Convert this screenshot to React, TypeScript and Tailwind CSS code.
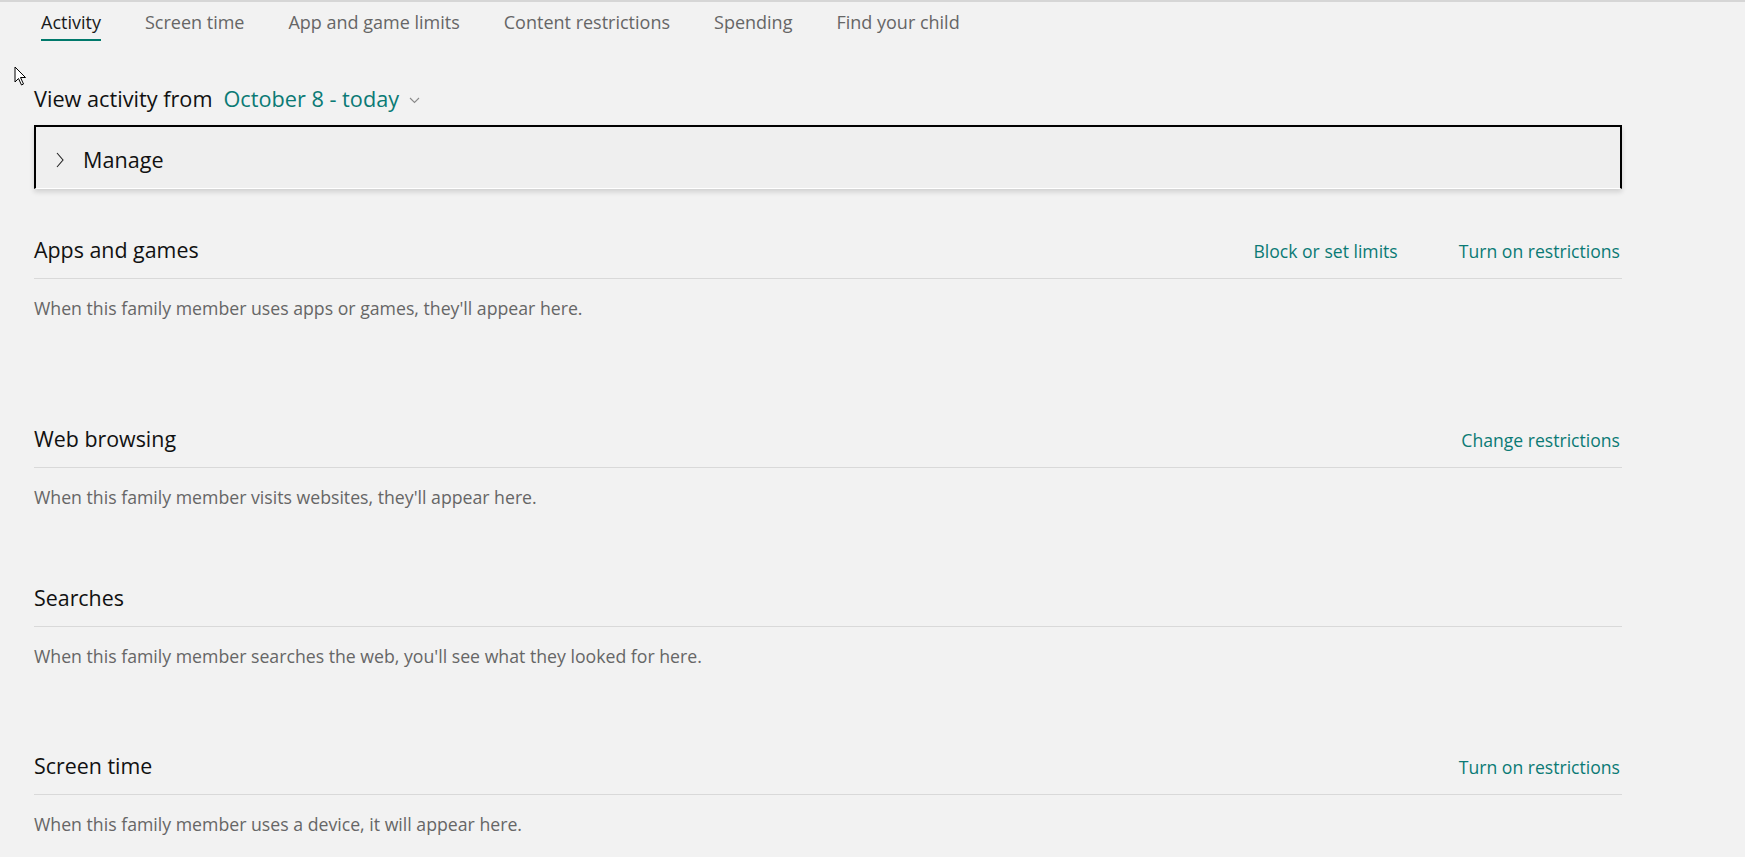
import React from "react"

const tabs = ["Activity", "Screen time", "App and game limits", "Content restrictions", "Spending", "Find your child"]

type Section = {
  title: string
  links: string[]
  text: string
  pad: string
}

const sections: Section[] = [
  {
    title: "Apps and games",
    links: ["Block or set limits", "Turn on restrictions"],
    text: "When this family member uses apps or games, they'll appear here.",
    pad: "pb-[105px]",
  },
  {
    title: "Web browsing",
    links: ["Change restrictions"],
    text: "When this family member visits websites, they'll appear here.",
    pad: "pb-[75px]",
  },
  {
    title: "Searches",
    links: [],
    text: "When this family member searches the web, you'll see what they looked for here.",
    pad: "pb-[84px]",
  },
  {
    title: "Screen time",
    links: ["Turn on restrictions"],
    text: "When this family member uses a device, it will appear here.",
    pad: "pb-[20px]",
  },
]

function Cursor() {
  return (
    <svg className="absolute left-[14px] top-[64px]" width="14" height="20" viewBox="0 0 14 20">
      <path d="M1 1 L1 16 L4.5 12.5 L7.5 19 L9.5 18 L6.5 11.5 L11.5 11.5 Z" fill="#fff" stroke="#000" strokeWidth="1" strokeLinejoin="miter" />
    </svg>
  )
}

export default function App() {
  return (
    <div
      className="relative min-h-screen overflow-hidden border-t-2 border-[#d6d6d6] bg-[#f2f2f2] text-black"
      style={{ fontFamily: '"Segoe UI", "Open Sans", "Noto Sans", sans-serif' }}
    >
      <Cursor />

      <nav className="flex gap-[44px] pl-[41px]">
        {tabs.map((tab, i) => (
          <div
            key={tab}
            className={
              i === 0
                ? "border-b-2 border-[#00796b] pt-[8px] pb-[5px] text-[18px] leading-[24px] text-[#1a1a1a]"
                : "border-b-2 border-transparent pt-[8px] pb-[5px] text-[18px] leading-[24px] text-[#666666]"
            }
          >
            {tab}
          </div>
        ))}
      </nav>

      <div className="w-[1588px] pl-[34px] box-content">
        <div className="mt-[44px] flex items-center text-[21.7px] leading-[28px]">
          <span className="text-[#111]">View activity from</span>
          <span className="ml-[11px] text-[#0b7a75]">October 8 - today</span>
          <svg className="ml-[10px] mt-[2px]" width="11" height="7" viewBox="0 0 11 7">
            <path d="M1 1 L5.5 5.5 L10 1" fill="none" stroke="#8a8a8a" strokeWidth="1.1" />
          </svg>
        </div>

        <div className="mt-[12px] flex h-[64px] items-center border-x-2 border-t-2 border-black border-b border-b-white bg-[#efefef] pl-[20px] pt-[5px] shadow-[0_3px_5px_rgba(0,0,0,0.14)]">
          <svg width="8" height="16" viewBox="0 0 8 16">
            <path d="M1 1 L7 8 L1 15" fill="none" stroke="#222" strokeWidth="1.1" />
          </svg>
          <span className="ml-[19px] text-[21.6px] leading-[30px] text-[#111]">Manage</span>
        </div>

        <div className="mt-[47px]">
          {sections.map((s) => (
            <section key={s.title} className={s.pad}>
              <div className="flex items-baseline justify-between border-b border-[#d9d9d9] pb-[14px]">
                <h2 className="text-[21.4px] font-normal leading-[28px] text-[#111]">{s.title}</h2>
                <div className="flex gap-[61px] pr-[2px]">
                  {s.links.map((l) => (
                    <a key={l} className="text-[17.6px] leading-[24px] text-[#0b7a75]">
                      {l}
                    </a>
                  ))}
                </div>
              </div>
              <p className="mt-[17px] text-[17.7px] leading-[24px] text-[#666666]">{s.text}</p>
            </section>
          ))}
        </div>
      </div>
    </div>
  )
}
